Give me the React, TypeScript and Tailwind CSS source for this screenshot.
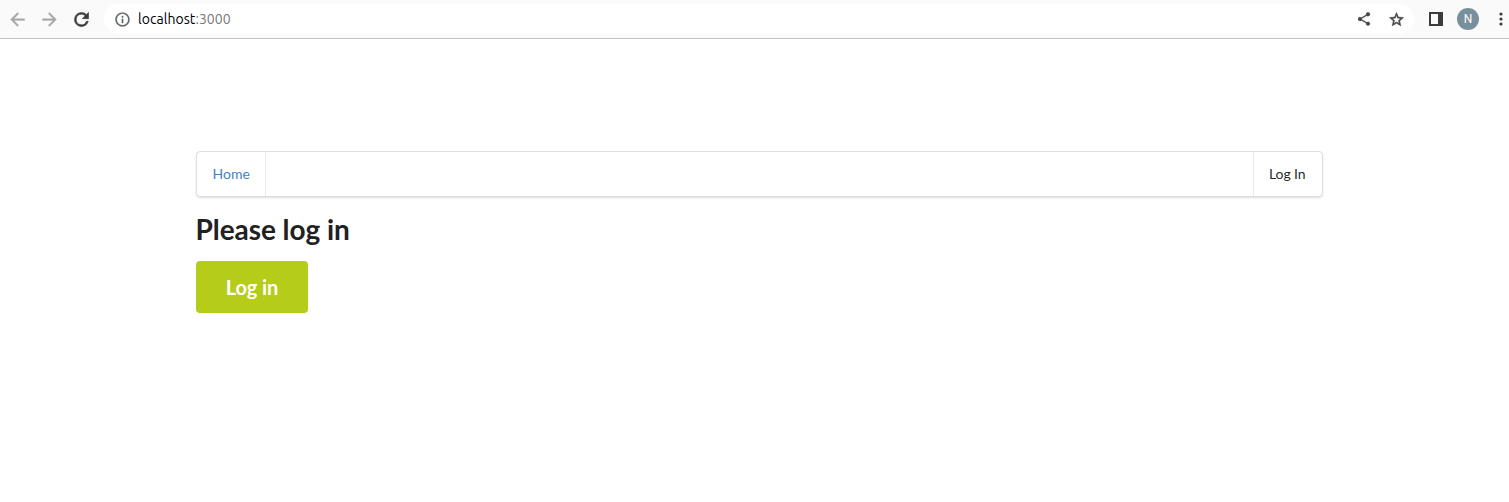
import React from "react";

function Icon({ d, className }: { d: string; className: string }) {
  return (
    <svg viewBox="0 0 24 24" fill="currentColor" stroke="currentColor" className={`block shrink-0 ${className}`}>
      <path d={d} />
    </svg>
  );
}

const BACK = "M20 11H7.83l5.59-5.59L12 4l-8 8 8 8 1.41-1.41L7.83 13H20v-2z";
const FORWARD = "M12 4l-1.41 1.41L16.17 11H4v2h12.17l-5.58 5.59L12 20l8-8z";
const RELOAD =
  "M17.65 6.35A7.96 7.96 0 0 0 12 4a8 8 0 1 0 7.73 10h-2.08A6 6 0 1 1 12 6c1.66 0 3.14.69 4.22 1.78L13 11h7V4l-2.35 2.35z";
const INFO =
  "M11 7h2v2h-2zm0 4h2v6h-2zm1-9C6.48 2 2 6.48 2 12s4.48 10 10 10 10-4.48 10-10S17.52 2 12 2zm0 18c-4.41 0-8-3.59-8-8s3.59-8 8-8 8 3.59 8 8-3.59 8-8 8z";
const SHARE =
  "M18 16.08c-.76 0-1.44.3-1.96.77L8.91 12.7c.05-.23.09-.46.09-.7s-.04-.47-.09-.7l7.05-4.11c.54.5 1.25.81 2.04.81 1.66 0 3-1.34 3-3s-1.34-3-3-3-3 1.34-3 3c0 .24.04.47.09.7L8.04 9.81C7.5 9.31 6.79 9 6 9c-1.66 0-3 1.34-3 3s1.34 3 3 3c.79 0 1.5-.31 2.04-.81l7.12 4.16c-.05.21-.08.43-.08.65 0 1.61 1.31 2.92 2.92 2.92s2.92-1.31 2.92-2.92-1.31-2.92-2.92-2.92z";
const STAR =
  "M22 9.24l-7.19-.62L12 2 9.19 8.63 2 9.24l5.46 4.73L5.82 21 12 17.27 18.18 21l-1.63-7.03L22 9.24zM12 15.4l-3.76 2.27 1-4.28-3.32-2.88 4.38-.38L12 6.1l1.71 4.04 4.38.38-3.32 2.88 1 4.28L12 15.4z";

function BrowserBar() {
  return (
    <header className="flex h-[39px] items-center overflow-hidden border-b border-[#c1c1c1] bg-[#fafafa] pl-[7px] text-[#3c3c3c]">
      <Icon d={BACK} className="size-[21px] stroke-[0.4] text-[#a8a8a8]" />
      <Icon d={FORWARD} className="ml-[11px] size-[21px] stroke-[0.4] text-[#a8a8a8]" />
      <Icon d={RELOAD} className="ml-[11px] size-[21px] stroke-[0.7]" />
      <div className="ml-3 flex h-[30px] w-[1310px] shrink-0 items-center rounded-full bg-white pl-[9.5px] pr-[9.5px]">
        <Icon d={INFO} className="size-[17px] stroke-[0.3] text-[#5f6368]" />
        <div className="ml-[7.5px] -mt-px font-['Ubuntu','Noto_Sans',sans-serif] text-[14px] tracking-[0.05px] leading-5 text-black">
          localhost<span className="text-[#777]">:3000</span>
        </div>
        <Icon d={SHARE} className="ml-auto size-4 stroke-[0.3] text-[#464646]" />
        <Icon d={STAR} className="ml-[15.5px] size-[17px] stroke-[0.7] text-[#464646]" />
      </div>
      <svg viewBox="0 0 14 14" className="ml-[15px] block size-3.5 shrink-0" fill="currentColor">
        <path fillRule="evenodd" d="M0 0H14V14H0ZM2 2V12H9V2Z" />
      </svg>
      <div className="ml-3.5 flex size-[22px] shrink-0 items-center justify-center rounded-full bg-[#78909c] font-['Roboto',sans-serif] text-xs leading-none text-white">
        N
      </div>
      <svg viewBox="0 0 4 14" className="ml-[19.5px] block h-3.5 w-1 shrink-0" fill="currentColor">
        <circle cx="2" cy="2" r="1.6" />
        <circle cx="2" cy="7" r="1.6" />
        <circle cx="2" cy="12" r="1.6" />
      </svg>
    </header>
  );
}

export default function App() {
  return (
    <div className="min-h-[502px] bg-white font-['Lato',sans-serif] text-[#212121]">
      <BrowserBar />
      <main className="ml-[196px] mt-28 w-[1127px]">
        <nav className="flex h-[46px] rounded border border-[#22242626] text-sm leading-none shadow-[0_1px_2px_0_rgba(34,36,38,0.15)]">
          <a href="#" className="flex w-[69px] items-center border-r border-[#2224261a] pl-[15.5px] text-[#4183c4]">
            Home
          </a>
          <a href="#" className="ml-auto flex w-[69px] items-center border-l border-[#2224261a] pl-[15px] tracking-[-0.1px] text-[#000000de]">
            Log In
          </a>
        </nav>
        <h1 className="-ml-[0.5px] mt-3.5 text-[28px] font-bold leading-9 tracking-[-0.05px]">Please log in</h1>
        <button className="mt-3.5 block h-[52px] w-28 rounded bg-[#b5cc18] text-xl font-bold leading-5 tracking-[-0.1px] text-white">
          Log in
        </button>
      </main>
    </div>
  );
}
